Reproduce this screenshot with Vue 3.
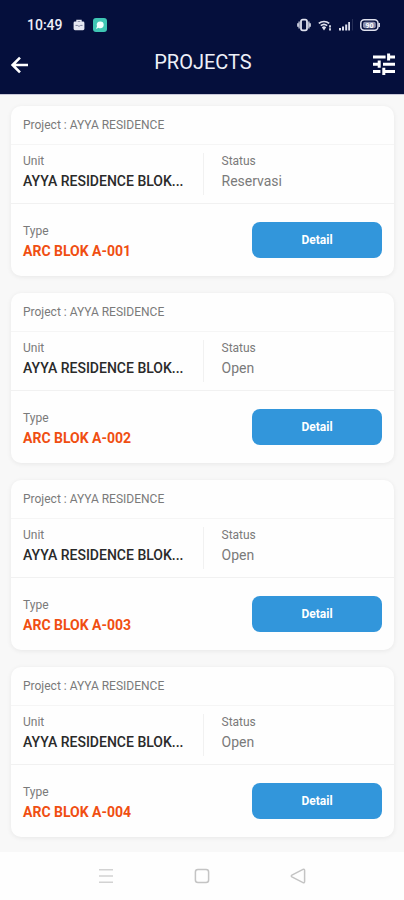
<script setup>
const projects = [
  { id: 1, project: 'AYYA RESIDENCE', unit: 'AYYA RESIDENCE BLOK...', status: 'Reservasi', type: 'ARC BLOK A-001' },
  { id: 2, project: 'AYYA RESIDENCE', unit: 'AYYA RESIDENCE BLOK...', status: 'Open', type: 'ARC BLOK A-002' },
  { id: 3, project: 'AYYA RESIDENCE', unit: 'AYYA RESIDENCE BLOK...', status: 'Open', type: 'ARC BLOK A-003' },
  { id: 4, project: 'AYYA RESIDENCE', unit: 'AYYA RESIDENCE BLOK...', status: 'Open', type: 'ARC BLOK A-004' },
]
</script>

<template>
  <div class="screen">
    <header class="top">
      <div class="status-bar">
        <div class="status-left">
          <span class="clock">10:49</span>
          <svg viewBox="0 0 12 12" width="12" height="12">
            <path d="M4 3V1.5h4V3" fill="none" stroke="#e6e8f2" stroke-width="1.4" />
            <rect x="0.6" y="2.6" width="10.8" height="8.6" rx="1.4" fill="#e6e8f2" />
            <path d="M2.5 6.4h2l.7.7h1.6l.7-.7h2" fill="none" stroke="#7b809b" stroke-width="1" />
          </svg>
          <svg viewBox="0 0 14 14" width="14" height="14">
            <rect width="14" height="14" rx="3" fill="#3fc6b4" />
            <path d="M7.3 3.4a3.4 3.4 0 0 1 0 6.8q-1 0-1.8-.5L3 11l1-2.8A3.4 3.4 0 0 1 7.3 3.4z" fill="#f1fffc" />
          </svg>
        </div>
        <div class="status-right">
          <svg viewBox="0 0 14 14" width="14" height="14" fill="none" stroke="#dfe1ee">
            <rect x="4" y="1.7" width="6" height="10.6" rx="1.8" stroke-width="1.8" />
            <path d="M2.1 3.6v6.8M11.9 3.6v6.8M.8 5.2v3.6M13.2 5.2v3.6" stroke-width="1.2" />
          </svg>
          <svg viewBox="0 0 14 12" width="14" height="12" fill="none" stroke="#dfe1ee">
            <path d="M.8 4.4a8 8 0 0 1 10.4 0M2.8 6.6a5 5 0 0 1 6.4 0" stroke-width="1.7" />
            <path d="M3.8 8.2a3.4 3.4 0 0 1 4.4 0L6 11.4z" fill="#dfe1ee" stroke="none" />
            <path d="M12 6.2v2.2M12 9.2v2.2" stroke-width="1.8" />
          </svg>
          <svg viewBox="0 0 14 12" width="14" height="12" fill="#dfe1ee">
            <path d="M0 9h2v2.6H0zM3 7.6h2v4H3zM6.2 5.6h2v6h-2zM9.2 3h1.8v8.6H9.2z" />
            <path d="M13 0h1v11.6h-1z" opacity=".15" />
          </svg>
          <svg viewBox="0 0 20 12" width="20" height="12">
            <rect x=".8" y=".8" width="17.2" height="10.4" rx="3.5" fill="none" stroke="#dfe1ee" stroke-width="1.5" />
            <path d="M19.2 4v4" stroke="#dfe1ee" stroke-width="1.5" />
            <rect x="3" y="2.8" width="12.8" height="6.4" rx="2" fill="#8b90ae" />
            <text class="charge" x="9.5" y="8.6" text-anchor="middle">90</text>
          </svg>
        </div>
      </div>
      <div class="app-bar">
        <button class="icon-button" aria-label="Back">
          <svg viewBox="0 0 24 24" width="24" height="24" fill="none" stroke="#fff" stroke-width="2.6">
            <path d="M18 13H3M10 5.6 2.6 13l7.4 7.4" />
          </svg>
        </button>
        <h1>PROJECTS</h1>
        <button class="icon-button" aria-label="Filter">
          <svg viewBox="0 0 24 24" width="24" height="24" fill="none" stroke="#fff" stroke-width="3">
            <path d="M1 5h12.6M17 5h6M16.6 1.4v7.2M1 12.2h6M11 12.2h12M7.2 8.4v7.4M1 19.4h7.4M12 19.4h11M11.8 15.8V23" />
          </svg>
        </button>
      </div>
    </header>

    <main class="list">
      <article v-for="p in projects" :key="p.id" class="card">
        <p class="project">Project : {{ p.project }}</p>
        <div class="details">
          <div class="cell unit">
            <span class="label">Unit</span>
            <strong class="value">{{ p.unit }}</strong>
          </div>
          <div class="cell state">
            <span class="label">Status</span>
            <span class="value">{{ p.status }}</span>
          </div>
        </div>
        <div class="footer">
          <div class="cell type">
            <span class="label">Type</span>
            <strong class="value">{{ p.type }}</strong>
          </div>
          <button class="detail">Detail</button>
        </div>
      </article>
    </main>

    <nav class="system-nav">
      <button aria-label="Recent apps">
        <svg viewBox="0 0 16 16" width="16" height="16" fill="none" stroke="#d2d2d2" stroke-width="1.6">
          <path d="M1 1.8h14M1 8h14M1 14.2h14" />
        </svg>
      </button>
      <button aria-label="Home">
        <svg viewBox="0 0 16 16" width="16" height="16" fill="none" stroke="#c4c4c4" stroke-width="1.5">
          <rect x="1.4" y="1.4" width="13.2" height="13.2" rx="2.5" />
        </svg>
      </button>
      <button aria-label="Back">
        <svg viewBox="0 0 16 16" width="16" height="16" fill="none" stroke="#c4c4c4" stroke-width="1.5">
          <path d="M13 1.4 1.9 7.2q-1.2.8 0 1.6L13 14.6q1.6.6 1.6-1V2.4q0-1.6-1.6-1z" />
        </svg>
      </button>
    </nav>
  </div>
</template>

<style>
body {
  background: #fefefe;
}
</style>

<style scoped>
.screen {
  display: flex;
  flex-direction: column;
  min-height: 100vh;
  background: #f8f8f8;
  font-family: Roboto, sans-serif;
}
button {
  border: 0;
  padding: 0;
  background: none;
  font-family: inherit;
  cursor: pointer;
}
svg {
  display: block;
}
h1,
p {
  margin: 0;
}
.top {
  background: #050f3c;
  color: #eef0f8;
  border-bottom: 1px solid #c9c8d8;
}
.status-bar {
  display: flex;
  justify-content: space-between;
  align-items: center;
  height: 34px;
  padding: 16px 24px 0 27px;
  box-sizing: border-box;
}
.status-left,
.status-right {
  display: flex;
  align-items: center;
}
.status-left {
  gap: 8px;
}
.status-right {
  gap: 7px;
}
.clock {
  margin-right: 2px;
  font-size: 14px;
  font-weight: 500;
  line-height: 16px;
}
.charge {
  font-size: 7px;
  font-weight: 700;
  fill: #fff;
}
.app-bar {
  display: grid;
  grid-template-columns: 24px 1fr 24px;
  align-items: center;
  height: 60px;
  padding: 0 8px 0 10px;
}
.icon-button {
  width: 24px;
  height: 24px;
}
h1 {
  padding-bottom: 4px;
  font-size: 20px;
  font-weight: 400;
  line-height: 24px;
  text-align: center;
}
.list {
  display: flex;
  flex: 1;
  flex-direction: column;
  gap: 17px;
  padding: 11px 10px 15px 11px;
}
.card {
  display: flex;
  flex-direction: column;
  border-radius: 10px;
  background: #fefefe;
  box-shadow: 0 1px 5px rgba(0, 0, 0, 0.07);
  color: #7a7a7a;
}
.project {
  padding: 11px 12px;
  border-bottom: 1px solid #f5f5f5;
  font-size: 12px;
  line-height: 16px;
}
.details {
  display: grid;
  grid-template-columns: 1fr 1fr;
  padding: 8px 0;
  border-bottom: 1px solid #f1f1f1;
}
.cell {
  display: flex;
  flex-direction: column;
  gap: 4px;
  padding: 0 12px;
}
.unit {
  padding-bottom: 6px;
}
.state {
  padding-left: 18px;
  border-left: 1px solid #f1f1f1;
}
.label {
  font-size: 12px;
  line-height: 16px;
}
.value {
  font-size: 14px;
  line-height: 16px;
}
.unit .value {
  color: #2a2a2a;
  font-weight: 500;
  white-space: nowrap;
}
.type .value {
  color: #f04e12;
  font-weight: 700;
}
.footer {
  display: flex;
  justify-content: space-between;
  align-items: flex-start;
  padding: 18px 12px 17px 0;
}
.type {
  padding-top: 1px;
}
.detail {
  width: 130px;
  height: 36px;
  border-radius: 8px;
  background: #3296db;
  color: #fff;
  font-size: 12px;
  font-weight: 700;
}
.system-nav {
  display: flex;
  justify-content: center;
  align-items: center;
  gap: 80px;
  height: 48px;
  background: #fefefe;
}
</style>
